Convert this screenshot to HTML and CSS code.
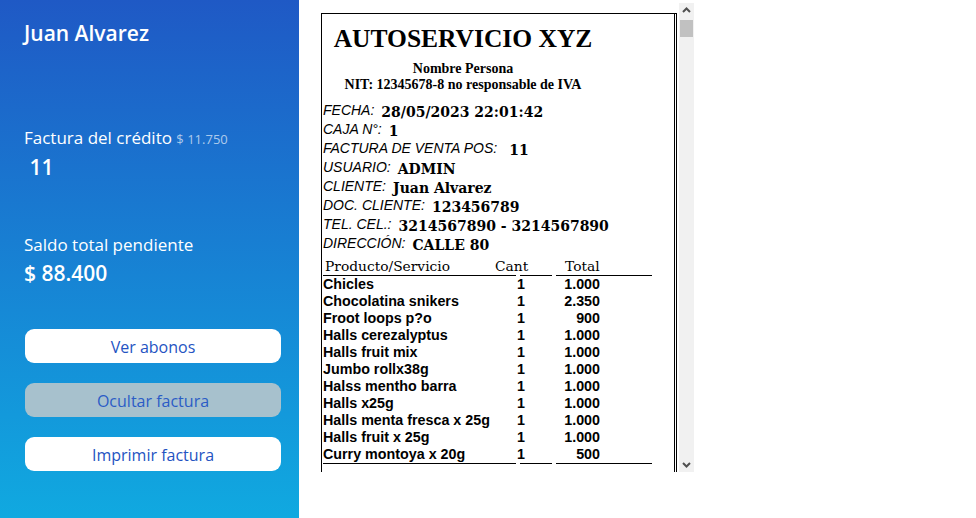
FILE: index.html
```html
<!DOCTYPE html>
<html lang="es">
<head>
<meta charset="utf-8">
<title>Factura</title>
<link rel="stylesheet" href="styles.css">
</head>
<body>
<div class="app">
  <aside class="side">
    <h1 class="name">Juan Alvarez</h1>
    <div class="info first">
      <div class="label">Factura del crédito <span class="sub">$ 11.750</span></div>
      <div class="value">&nbsp;11</div>
    </div>
    <div class="info second">
      <div class="label">Saldo total pendiente</div>
      <div class="value">$ 88.400</div>
    </div>
    <div class="actions">
      <button class="btn">Ver abonos</button>
      <button class="btn muted">Ocultar factura</button>
      <button class="btn">Imprimir factura</button>
    </div>
  </aside>
  <main class="preview">
    <div class="frame">
      <div class="viewport">
        <div class="receipt">
          <div class="rhead">
            <div class="title">AUTOSERVICIO XYZ</div>
            <div class="owner">Nombre Persona</div>
            <div class="owner">NIT: 12345678-8 no responsable de IVA</div>
          </div>
          <div class="fields">
            <div class="field"><span class="fl">FECHA:</span><span class="fv">28/05/2023 22:01:42</span></div>
            <div class="field"><span class="fl">CAJA N°:</span><span class="fv">1</span></div>
            <div class="field wide"><span class="fl">FACTURA DE VENTA POS:</span><span class="fv">11</span></div>
            <div class="field"><span class="fl">USUARIO:</span><span class="fv">ADMIN</span></div>
            <div class="field"><span class="fl">CLIENTE:</span><span class="fv">Juan Alvarez</span></div>
            <div class="field"><span class="fl">DOC. CLIENTE:</span><span class="fv">123456789</span></div>
            <div class="field"><span class="fl">TEL. CEL.:</span><span class="fv">3214567890 - 3214567890</span></div>
            <div class="field"><span class="fl">DIRECCIÓN:</span><span class="fv">CALLE 80</span></div>
          </div>
          <div class="thead"><span>Producto/Servicio</span><span>Cant</span><span>Total</span></div>
          <div class="rule"><i class="seg s1"></i><i class="seg s2"></i><i class="seg s3"></i></div>
          <div class="items">
            <span>Chicles</span><span class="q">1</span><span class="t">1.000</span>
            <span>Chocolatina snikers</span><span class="q">1</span><span class="t">2.350</span>
            <span>Froot loops p?o</span><span class="q">1</span><span class="t">900</span>
            <span>Halls cerezalyptus</span><span class="q">1</span><span class="t">1.000</span>
            <span>Halls fruit mix</span><span class="q">1</span><span class="t">1.000</span>
            <span>Jumbo rollx38g</span><span class="q">1</span><span class="t">1.000</span>
            <span>Halss mentho barra</span><span class="q">1</span><span class="t">1.000</span>
            <span>Halls x25g</span><span class="q">1</span><span class="t">1.000</span>
            <span>Halls menta fresca x 25g</span><span class="q">1</span><span class="t">1.000</span>
            <span>Halls fruit x 25g</span><span class="q">1</span><span class="t">1.000</span>
            <span>Curry montoya x 20g</span><span class="q">1</span><span class="t">500</span>
          </div>
          <div class="rule"><i class="seg s1"></i><i class="seg s2"></i><i class="seg s3"></i></div>
          <div class="more"></div>
        </div>
      </div>
      <div class="scrollbar">
        <div class="arrow">
          <svg width="15" height="15" viewBox="0 0 15 15"><polyline points="4,9 7.5,5.5 11,9" fill="none" stroke="#505050" stroke-width="2"/></svg>
        </div>
        <div class="track"><div class="thumb"></div></div>
        <div class="arrow">
          <svg width="15" height="15" viewBox="0 0 15 15"><polyline points="4,6 7.5,9.5 11,6" fill="none" stroke="#505050" stroke-width="2"/></svg>
        </div>
      </div>
    </div>
  </main>
</div>
</body>
</html>
```
FILE: styles.css
```css
html, body {
  margin: 0;
  padding: 0;
  background: #ffffff;
}
.app {
  display: flex;
  width: 976px;
  height: 518px;
  overflow: hidden;
}
.side {
  width: 299px;
  flex: 0 0 299px;
  box-sizing: border-box;
  padding: 21px 18px 0 24px;
  background: linear-gradient(to bottom, #1f59c5 0%, #1689d6 60%, #10a9e0 100%);
  color: #ffffff;
  font-family: "Open Sans", "Noto Sans", sans-serif;
  display: flex;
  flex-direction: column;
}
.name {
  margin: 0;
  font-size: 21px;
  line-height: 24px;
  font-weight: 600;
}
.info.first { margin-top: 81px; }
.info.second { margin-top: 53px; }
.label {
  font-size: 17px;
  line-height: 24px;
  font-weight: 400;
}
.sub {
  font-size: 13px;
  color: rgba(255, 255, 255, 0.65);
}
.value {
  margin-top: 3px;
  font-size: 21px;
  line-height: 26px;
  font-weight: 600;
}
.actions {
  margin-top: 43px;
  display: flex;
  flex-direction: column;
  gap: 20px;
  padding-left: 1px;
}
.btn {
  height: 34px;
  border: none;
  border-radius: 9px;
  background: #ffffff;
  color: #2453c2;
  font-family: "Open Sans", "Noto Sans", sans-serif;
  font-size: 16px;
  font-weight: 500;
  padding: 1px 0 0;
}
.btn.muted {
  background: #a7c1cd;
  color: #2b5cc6;
}
.preview {
  flex: 1;
  padding: 3px 0 0 22px;
}
.frame {
  display: flex;
  width: 373px;
  height: 469px;
}
.viewport {
  width: 358px;
  height: 469px;
  overflow: hidden;
}
.receipt {
  margin-top: 10px;
  width: 356px;
  box-sizing: border-box;
  border-top: 1px solid #000;
  border-left: 1px solid #000;
  border-right: 3px double #000;
  padding-left: 1px;
  color: #000;
}
.rhead {
  width: 280px;
  text-align: center;
  font-family: "Liberation Serif", "Times New Roman", serif;
  font-weight: bold;
  padding-top: 10px;
}
.title {
  font-size: 25.5px;
  line-height: 30px;
  margin-bottom: 7px;
}
.owner {
  font-size: 14px;
  line-height: 16px;
}
.fields {
  margin-top: 8px;
}
.field {
  display: flex;
  align-items: flex-start;
  gap: 7px;
  height: 19px;
}
.field.wide { gap: 12px; }
.fl {
  font-family: "Liberation Sans", Arial, sans-serif;
  font-style: italic;
  font-size: 14px;
  line-height: 19px;
}
.fv {
  font-family: "DejaVu Serif", serif;
  font-weight: bold;
  font-size: 14px;
  line-height: 19px;
  padding-top: 2px;
}
.thead {
  margin-top: 5px;
  display: grid;
  grid-template-columns: 172px 70px auto;
  font-family: "DejaVu Serif", serif;
  font-size: 13.8px;
  line-height: 17px;
  height: 17px;
}
.thead span:first-child { padding-left: 2px; }
.rule {
  display: flex;
  gap: 4px;
  height: 1px;
}
.seg {
  display: block;
  height: 1px;
  background: #000;
}
.s1 { width: 193px; }
.s2 { width: 32px; }
.s3 { width: 96px; }
.items {
  display: grid;
  grid-template-columns: 194px 40px 43px;
  font-family: "Liberation Sans", Arial, sans-serif;
  font-weight: bold;
  font-size: 14.3px;
  line-height: 17px;
}
.items .t { text-align: right; }
.more { height: 60px; }
.scrollbar {
  width: 15px;
  height: 469px;
  background: #f1f1f1;
  display: flex;
  flex-direction: column;
}
.arrow {
  height: 15px;
  display: flex;
}
.track {
  flex: 1;
  padding-top: 2px;
}
.thumb {
  height: 17px;
  background: #c1c1c1;
  margin: 0 1px;
}
```
